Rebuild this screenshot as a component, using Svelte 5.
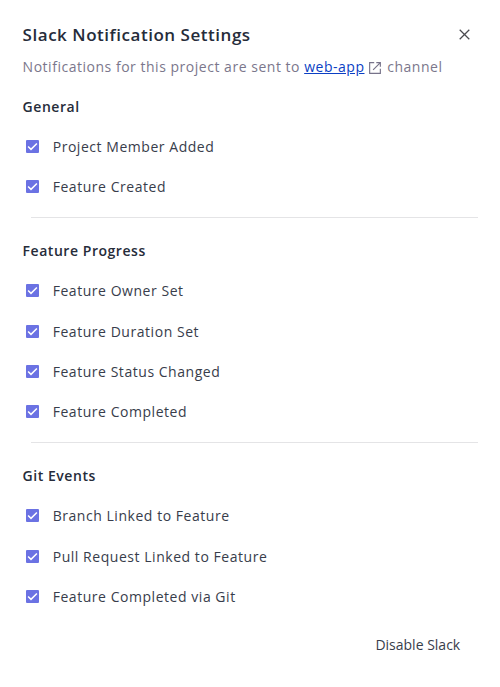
<script>
  const sections = [
    { title: 'General', items: ['Project Member Added', 'Feature Created'] },
    {
      title: 'Feature Progress',
      items: ['Feature Owner Set', 'Feature Duration Set', 'Feature Status Changed', 'Feature Completed'],
    },
    {
      title: 'Git Events',
      items: ['Branch Linked to Feature', 'Pull Request Linked to Feature', 'Feature Completed via Git'],
    },
  ];
</script>

<main class="dialog">
  <header class="head">
    <h1>Slack Notification Settings</h1>
    <button class="close" aria-label="Close">
      <svg width="11" height="11" viewBox="0 0 11 11">
        <path d="M.7.7l9.6 9.6M10.3.7L.7 10.3" fill="none" stroke="#4b4b50" stroke-width="1.25" />
      </svg>
    </button>
  </header>
  <p class="sub">
    Notifications for this project are sent to <a href="#web-app">web-app</a>
    <svg class="ext" width="12" height="12" viewBox="0 0 12 12">
      <path d="M5.2.65H.65v10.7h10.7V6.8M7.3.65h4.05V4.7M11.1.9L4.1 7.9" fill="none" stroke="#77738a" stroke-width="1.15" />
    </svg>
    channel
  </p>

  {#each sections as section}
    <section>
      <h2>{section.title}</h2>
      {#each section.items as item}
        <div class="row" role="checkbox" aria-checked="true" tabindex="-1">
          <svg class="box" width="13" height="13" viewBox="0 0 13 13">
            <rect width="13" height="13" rx="1" fill="#6b72e3" />
            <path d="M2.1 6.5l2.9 2.9 5.9-5.9" fill="none" stroke="#fff" stroke-width="1.5" />
          </svg>
          <span>{item}</span>
        </div>
      {/each}
    </section>
  {/each}

  <footer><button class="disable">Disable Slack</button></footer>
</main>

<style>
  :global(body) {
    background: #fff;
  }
  .dialog {
    box-sizing: border-box;
    width: 500px;
    height: 687px;
    padding: 20px 22px 0 22.6px;
    overflow: hidden;
    font-family: 'Open Sans', 'Noto Sans', sans-serif;
    font-size: 14px;
    color: #383d4b;
    letter-spacing: 0.54px;
  }
  .head {
    display: flex;
    align-items: center;
    justify-content: space-between;
    height: 30px;
  }
  h1 {
    margin: 0;
    font-size: 17px;
    font-weight: 600;
    line-height: 30px;
    color: #262c3a;
    letter-spacing: 0.53px;
  }
  button {
    padding: 0;
    border: 0;
    background: none;
    font: inherit;
    color: inherit;
  }
  .close {
    display: flex;
    margin-right: 8px;
    margin-top: -2px;
  }
  .sub {
    margin: 7px 0 0;
    height: 20px;
    line-height: 20px;
    white-space: nowrap;
    letter-spacing: 0.52px;
    color: #7b778c;
  }
  .sub a {
    color: #0b3fc4;
  }
  .ext {
    vertical-align: -1.5px;
    margin: 0 1.8px 0 0.6px;
  }
  section {
    padding-top: 13.2px;
  }
  section:first-of-type {
    padding-top: 10px;
  }
  section:not(:last-of-type)::after {
    content: '';
    display: block;
    margin: 10.5px 0 0 8.4px;
    border-bottom: 1px solid #e4e4e6;
  }
  h2 {
    margin: 0;
    font-size: 14px;
    font-weight: 600;
    line-height: 40px;
    color: #262c3a;
  }
  section:first-of-type h2 {
    margin-bottom: -1px;
  }
  .row {
    display: flex;
    align-items: center;
    height: 40.1px;
    padding-left: 3.4px;
  }
  .box {
    flex: none;
    margin-right: 13.7px;
  }
  footer {
    display: flex;
    justify-content: flex-end;
    padding: 18.5px 17.8px 0 0;
  }
  .disable {
    line-height: 20px;
    letter-spacing: 0;
  }
</style>
